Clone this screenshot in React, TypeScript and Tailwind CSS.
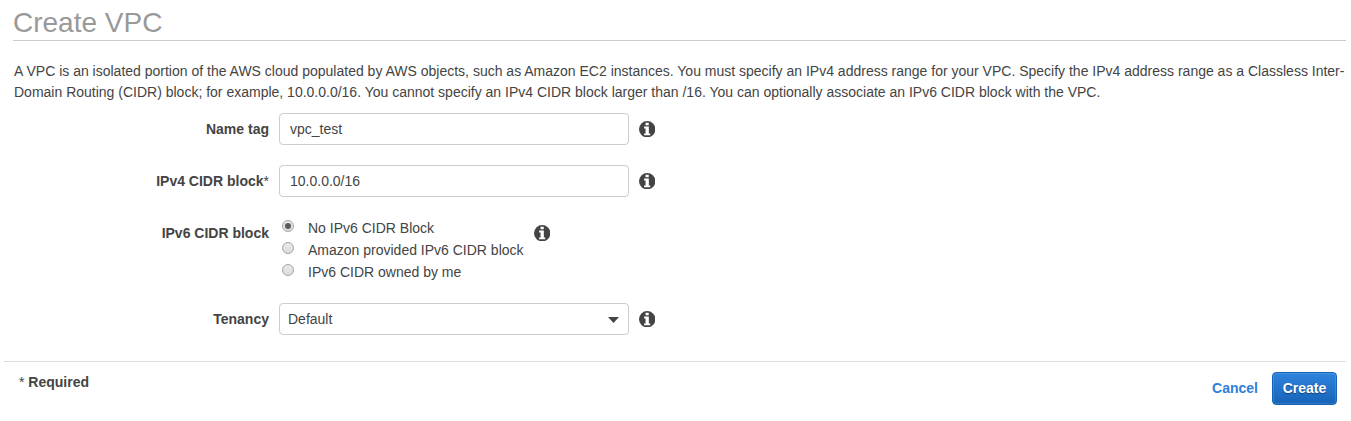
import { useState, type ReactNode } from "react";

function Info({ className = "" }: { className?: string }) {
  return (
    <svg aria-hidden viewBox="0 0 16 16" className={`size-[16.4px] shrink-0 ${className}`}>
      <circle cx="8" cy="8" r="8" className="fill-[#444444]" />
      <path d="M6.4 1.6H9.5V4.1H6.4ZM5 5.4H9.6V12.1H11V14H5V12.1H6.4V7.2H5Z" className="fill-white" />
    </svg>
  );
}

function Row({ label, required, children }: { label: string; required?: boolean; children: ReactNode }) {
  return (
    <div className="flex items-start">
      <div className="w-[269px] shrink-0 text-right font-bold leading-8">
        {label}
        {required && <span className="font-normal">*</span>}
      </div>
      <div className="ml-[10px] flex items-start">{children}</div>
    </div>
  );
}

function TextField({ label, value, required }: { label: string; value: string; required?: boolean }) {
  return (
    <Row label={label} required={required}>
      <input
        aria-label={label}
        defaultValue={value}
        className="h-8 w-[350px] rounded-[4px] border border-[#cccccc] bg-white px-[10px] text-[14px] outline-none"
      />
      <Info className="mt-[7.6px] ml-[10px]" />
    </Row>
  );
}

const ipv6Options = ["No IPv6 CIDR Block", "Amazon provided IPv6 CIDR block", "IPv6 CIDR owned by me"];

export default function App() {
  const [ipv6, setIpv6] = useState(0);

  return (
    <div className="h-[421px] w-[1351px] overflow-hidden bg-white font-['Liberation_Sans',Arial,sans-serif] text-[14px] text-[#444444]">
      <h1 className="ml-[13px] mr-[5px] h-[41px] border-b border-[#cccccc] pt-[6px] text-[28px] leading-[34px] text-[#999999]">
        Create VPC
      </h1>
      <p className="mt-5 ml-[14px] w-[1334px] leading-[21px]">
        <span className="block whitespace-nowrap">
          A VPC is an isolated portion of the AWS cloud populated by AWS objects, such as Amazon EC2 instances. You must
          specify an IPv4 address range for your VPC. Specify the IPv4 address range as a Classless Inter-
        </span>
        <span className="block whitespace-nowrap">
          Domain Routing (CIDR) block; for example, 10.0.0.0/16. You cannot specify an IPv4 CIDR block larger than /16.
          You can optionally associate an IPv6 CIDR block with the VPC.
        </span>
      </p>

      <div className="mt-[10px] flex flex-col gap-5">
        <TextField label="Name tag" value="vpc_test" />
        <TextField label="IPv4 CIDR block" value="10.0.0.0/16" required />

        <Row label="IPv6 CIDR block">
          <div className="flex w-[245px] flex-col">
            {ipv6Options.map((option, i) => (
              <label key={option} className="flex h-[22px] items-start">
                <input
                  type="radio"
                  name="ipv6"
                  checked={ipv6 === i}
                  onChange={() => setIpv6(i)}
                  className="sr-only"
                />
                <span className="mt-[3px] ml-[3px] flex size-3 items-center justify-center rounded-full border border-[#a5a5a5] bg-linear-to-b from-[#e9e9e9] to-[#dcdcdc]">
                  {ipv6 === i && <span className="size-[6px] rounded-full bg-[#5a5a5a]" />}
                </span>
                <span className="ml-[14px] leading-[22px]">{option}</span>
              </label>
            ))}
          </div>
          <Info className="mt-[7.6px] ml-[10px]" />
        </Row>

        <Row label="Tenancy">
          <button
            type="button"
            className="flex h-8 w-[350px] items-center justify-between rounded-[4px] border border-[#cccccc] bg-white pr-[9px] pl-2"
          >
            Default
            <svg viewBox="0 0 11 6" className="mt-px h-[6px] w-[11px] fill-[#444444]">
              <path d="M0 0H11L5.5 6Z" />
            </svg>
          </button>
          <Info className="mt-[7.6px] ml-[10px]" />
        </Row>
      </div>

      <footer className="mt-[26px] mr-[5px] ml-1 flex justify-between border-t border-[#dddddd] pr-[9px] pl-[15px]">
        <div className="pt-[10px] font-bold leading-5">
          <span className="font-normal">*</span> Required
        </div>
        <div className="flex items-center gap-[14px] pt-[10px] font-bold">
          <button type="button" className="text-[#2e7fd9]">
            Cancel
          </button>
          <button
            type="button"
            className="h-[33px] w-[65px] rounded-[4px] border border-[#1663b5] bg-linear-to-b from-[#2f83dc] to-[#1564b9] text-white shadow-[inset_0_0_0_1px_rgba(255,255,255,0.12)] [text-shadow:0_1px_1px_rgba(0,0,0,0.4)]"
          >
            Create
          </button>
        </div>
      </footer>
    </div>
  );
}
